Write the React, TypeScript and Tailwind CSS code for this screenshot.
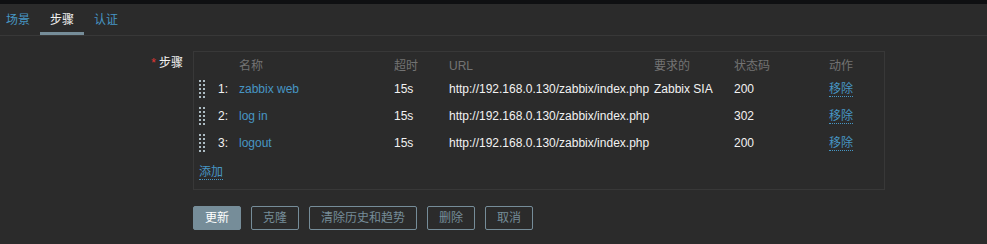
import React from "react";

const font = { fontFamily: '"Liberation Sans", Arial, "Noto Sans CJK SC", sans-serif' };

function Handle() {
  const dots = [];
  for (let r = 0; r < 5; r++) {
    for (let c = 0; c < 2; c++) {
      dots.push(<rect key={`${r}-${c}`} x={c * 4} y={r * 4} width={2} height={2} fill="#acbbc2" />);
    }
  }
  return (
    <svg width="6" height="18" viewBox="0 0 6 18">
      {dots}
    </svg>
  );
}

const rows = [
  { n: "1:", name: "zabbix web", t: "15s", url: "http://192.168.0.130/zabbix/index.php", req: "Zabbix SIA", code: "200" },
  { n: "2:", name: "log in", t: "15s", url: "http://192.168.0.130/zabbix/index.php", req: "", code: "302" },
  { n: "3:", name: "logout", t: "15s", url: "http://192.168.0.130/zabbix/index.php", req: "", code: "200" },
];

const cols = "grid grid-cols-[16px_14px_165px_55px_205px_80px_95px_1fr]";

export default function App() {
  return (
    <div className="w-[987px] h-[244px] bg-[#2b2b2b] text-[12px] text-[#f2f2f2] overflow-hidden" style={font}>
      <div className="h-[4px] bg-[#0f1012]" />
      <div className="flex h-[32px] border-b border-[#383838]">
        <div className="pl-[6px] pr-[10px] flex items-center text-[#4796c4] border-b-[3px] border-transparent pt-[3px]">场景</div>
        <div className="px-[10px] flex items-center text-[#f2f2f2] border-b-[3px] border-[#768d99] pt-[3px]">步骤</div>
        <div className="px-[10px] flex items-center text-[#4796c4] border-b-[3px] border-transparent pt-[3px]">认证</div>
      </div>
      <div className="flex mt-[15px]">
        <div className="w-[183px] flex justify-end pt-[5px] leading-[14px]">
          <span className="text-[#e33734] mr-[3px]">*</span>
          <span>步骤</span>
        </div>
        <div className="ml-[10px] w-[692px] h-[139px] border border-[#383838] pl-[5px] pt-[5px]">
          <div className={`${cols} h-[17px] items-center text-[#737373]`}>
            <div />
            <div />
            <div className="pl-[10px]">名称</div>
            <div>超时</div>
            <div>URL</div>
            <div>要求的</div>
            <div>状态码</div>
            <div>动作</div>
          </div>
          <div className="mt-[1px]">
            {rows.map((r) => (
              <div key={r.n} className={`${cols} h-[27px] items-center`}>
                <div className="flex items-center"><Handle /></div>
                <div className="text-right pr-[1px]">{r.n}</div>
                <div className="pl-[10px] text-[#4796c4]">{r.name}</div>
                <div>{r.t}</div>
                <div className="whitespace-nowrap">{r.url}</div>
                <div className="whitespace-nowrap">{r.req}</div>
                <div>{r.code}</div>
                <div>
                  <span className="text-[#4796c4] border-b border-dotted border-[#4796c4]">移除</span>
                </div>
              </div>
            ))}
          </div>
          <div className="mt-[7px]">
            <span className="text-[#4796c4] border-b border-dotted border-[#4796c4]">添加</span>
          </div>
        </div>
      </div>
      <div className="flex gap-[10px] ml-[193px] mt-[16px]">
        <button className="h-[24px] px-[11px] border border-[#768d99] bg-[#768d99] text-[#ffffff] rounded-[2px]">更新</button>
        <button className="h-[24px] px-[11px] border border-[#768d99] text-[#768d99] rounded-[2px]">克隆</button>
        <button className="h-[24px] px-[11px] border border-[#768d99] text-[#768d99] rounded-[2px]">清除历史和趋势</button>
        <button className="h-[24px] px-[11px] border border-[#768d99] text-[#768d99] rounded-[2px]">删除</button>
        <button className="h-[24px] px-[11px] border border-[#768d99] text-[#768d99] rounded-[2px]">取消</button>
      </div>
    </div>
  );
}
